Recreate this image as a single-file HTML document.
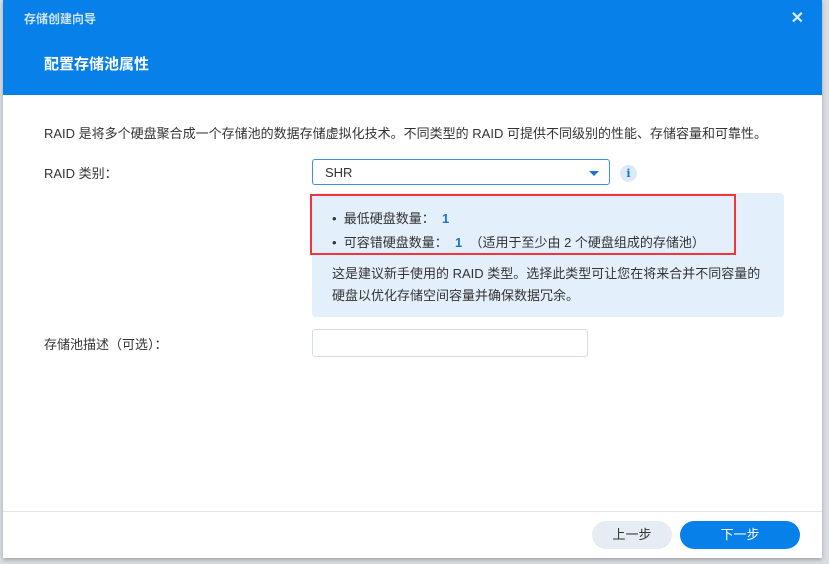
<html><head><style>
body{margin:0;width:829px;height:564px;background:#d9dce0;font-family:"Liberation Sans","Noto Sans CJK SC",sans-serif;position:relative;overflow:hidden}
.win{position:absolute;left:3px;top:0;width:819px;height:558px;background:#fff;box-shadow:0 2px 4px rgba(0,0,0,.25)}
.hd{position:absolute;left:0;top:0;width:819px;height:95px;background:#0880ea}
.t1{position:absolute;left:21px;top:10px;font-size:12px;color:#cfe4fb;font-weight:bold}
.x{position:absolute;right:18px;top:8px;font-size:16px;color:#dbeaff;font-weight:bold}
.t2{position:absolute;left:41px;top:53px;font-size:15px;color:#fff;font-weight:bold}
.tx{position:absolute;font-size:13px;color:#333;white-space:nowrap}
.sel{position:absolute;left:309px;top:159px;width:298px;height:26px;border:1px solid #3c8fe6;border-radius:3px;box-sizing:border-box}
.sel span{position:absolute;left:12px;top:5px;font-size:13px;color:#333}
.arr{position:absolute;right:10px;top:11px;border-left:5px solid transparent;border-right:5px solid transparent;border-top:5px solid #1a73d9}
.info{position:absolute;left:617px;top:165px;width:17px;height:17px;border-radius:50%;background:#dce9f8;color:#1a73d9;font-size:11px;font-weight:bold;text-align:center;line-height:17px;font-family:"DejaVu Serif",serif}
.box{position:absolute;left:309px;top:193px;width:472px;height:124px;background:#e3effb;border-radius:4px}
.red{position:absolute;left:307px;top:194px;width:426px;height:61px;border:2.5px solid #f2343b;box-sizing:border-box}
.b{color:#1a73d9;font-weight:bold}
.inp{position:absolute;left:309px;top:329px;width:276px;height:28px;border:1px solid #d5dde6;border-radius:3px;box-sizing:border-box}
.sep{position:absolute;left:0;top:511px;width:819px;height:1px;background:#e1e6ec}
.btn{position:absolute;top:521px;height:28px;border-radius:14px;font-size:13px;text-align:center;line-height:28px}
</style></head><body>
<div class="win">
<div class="hd"><div class="t1">存储创建向导</div><div class="x">✕</div><div class="t2">配置存储池属性</div></div>
<div class="tx" style="left:41px;top:123px">RAID 是将多个硬盘聚合成一个存储池的数据存储虚拟化技术。不同类型的 RAID 可提供不同级别的性能、存储容量和可靠性。</div>
<div class="tx" style="left:41px;top:163px">RAID 类别：</div>
<div class="sel"><span>SHR</span><div class="arr"></div></div>
<div class="info">i</div>
<div class="box"></div>
<div class="tx" style="left:329px;top:208px">•&nbsp; 最低硬盘数量：&nbsp; <span class="b">1</span></div>
<div class="tx" style="left:329px;top:232px">•&nbsp; 可容错硬盘数量：&nbsp; <span class="b">1</span>&nbsp; （适用于至少由 2 个硬盘组成的存储池）</div>
<div class="tx" style="left:329px;top:263px">这是建议新手使用的 RAID 类型。选择此类型可让您在将来合并不同容量的</div>
<div class="tx" style="left:329px;top:285px">硬盘以优化存储空间容量并确保数据冗余。</div>
<div class="red"></div>
<div class="tx" style="left:41px;top:334px">存储池描述（可选）：</div>
<div class="inp"></div>
<div class="sep"></div>
<div class="btn" style="left:589px;width:80px;background:#e6ecf3;color:#333">上一步</div>
<div class="btn" style="left:677px;width:120px;background:#0880ea;color:#fff">下一步</div>
</div>
</body></html>
